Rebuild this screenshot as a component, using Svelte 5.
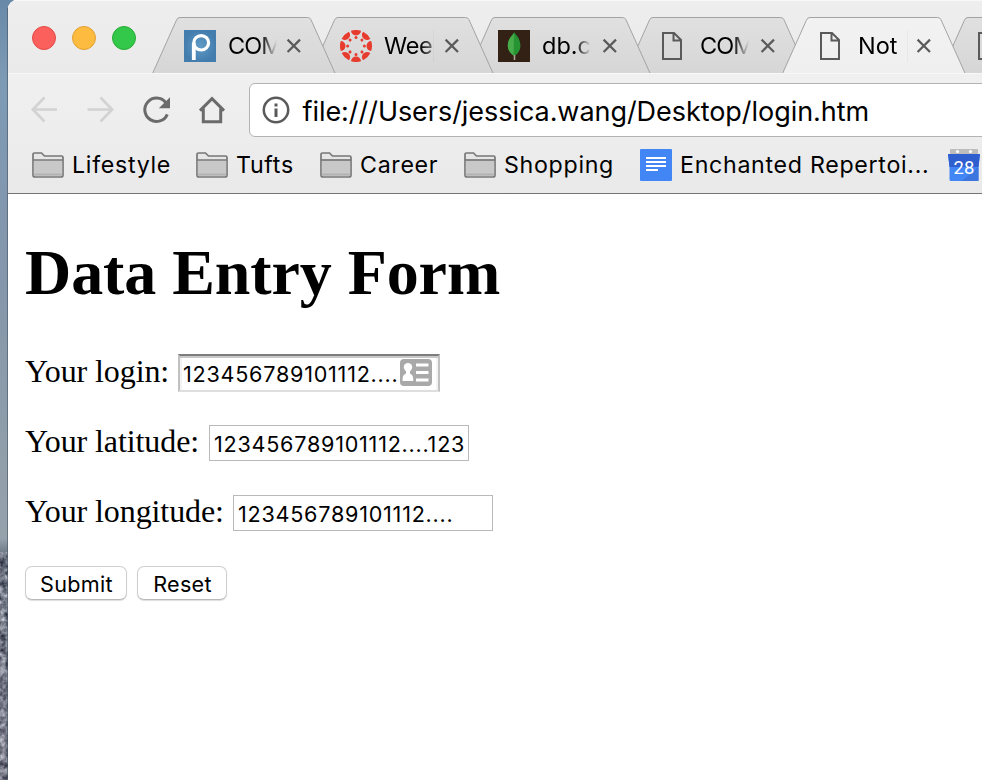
<script>
  const tabs = [
    { title: 'COM', icon: 'pandora', spacing: -0.9, inset: 32, gap: 8 },
    { title: 'Wee', icon: 'canvas', spacing: -0.3, inset: 30.5, gap: 9.5, sliver: true },
    { title: 'db.c', icon: 'mongo', spacing: 0, inset: 31, gap: 9.5 },
    { title: 'COM', icon: 'page', spacing: -0.9, inset: 31.5, gap: 9.5 },
    { title: 'Not', icon: 'page', spacing: 0, inset: 32, gap: 8, active: true, sliver: true },
    { title: '', icon: 'page', spacing: 0, inset: 32, gap: 8 }
  ];

  const folders = [
    { name: 'Lifestyle', width: 164 },
    { name: 'Tufts', width: 124 },
    { name: 'Career', width: 144 },
    { name: 'Shopping', width: 176 }
  ];

  const fields = [
    { id: 'login', label: 'Your login:', value: '123456789101112....', width: 153 },
    { id: 'latitude', label: 'Your latitude:', value: '123456789101112....123', width: 184 },
    { id: 'longitude', label: 'Your longitude:', value: '123456789101112....', width: 208 }
  ];

  const spokes = [0, 45, 90, 135, 180, 225, 270, 315];
</script>

<div class="desktop">
  <svg class="wallpaper" width="14" height="780" aria-hidden="true">
    <defs>
      <linearGradient id="sky" x1="0" y1="0" x2="0" y2="1">
        <stop offset="0" stop-color="#6889a8" />
        <stop offset=".1" stop-color="#7d9ab5" />
        <stop offset=".35" stop-color="#8496ab" />
        <stop offset=".6" stop-color="#919faa" />
        <stop offset=".69" stop-color="#96a2ab" />
        <stop offset=".715" stop-color="#626f7d" />
        <stop offset=".77" stop-color="#6e7886" />
        <stop offset="1" stop-color="#74737f" />
      </linearGradient>
      <filter id="grain" x="0" y="0" width="1" height="1" color-interpolation-filters="sRGB">
        <feTurbulence type="fractalNoise" baseFrequency=".16" numOctaves="3" seed="4" />
        <feColorMatrix values="1.5 0 0 0 -.3  1.5 0 0 0 -.29  1.45 0 0 0 -.21  0 0 0 0 .65" />
      </filter>
    </defs>
    <rect width="14" height="780" fill="url(#sky)" />
    <rect y="552" width="14" height="228" filter="url(#grain)" />
    <rect x="7" y="8" width="1" height="772" fill="#465462" opacity=".6" />
  </svg>

  <div class="window">
    <header>
      <div class="strip">
        <div class="lights"><i class="red"></i><i class="yellow"></i><i class="green"></i></div>
        <div class="tabs">
          {#each tabs as tab, i}
            <div class="tab" style:z-index={tab.active ? 10 : 9 - i}>
              <svg class="shape" width="184" height="57" viewBox="0 0 184 57" aria-hidden="true">
                <defs>
                  <linearGradient id="tab{i}" x1="0" y1="0" x2="0" y2="1">
                    <stop offset="0" stop-color={tab.active ? '#f2f2f2' : '#e0e0e0'} />
                    <stop offset="1" stop-color={tab.active ? '#efefef' : '#d6d6d6'} />
                  </linearGradient>
                </defs>
                <path
                  d="M.3 57 L24.6 2.8 Q25.6 .5 28 .5 H155.5 Q158 .5 159 2.8 L183.4 57"
                  fill="url(#tab{i})"
                  stroke="#a3a3a3"
                />
              </svg>
              <div class="tab-body" style:padding-left="{tab.inset}px">
                <svg class="favicon" width="32" height="32" viewBox="0 0 32 32" aria-hidden="true">
                  {#if tab.icon === 'pandora'}
                    <radialGradient id="blue"><stop stop-color="#609ac5" /><stop offset="1" stop-color="#427dae" /></radialGradient>
                    <rect width="32" height="32" fill="url(#blue)" />
                    <path d="M9.8 30V12.7" fill="none" stroke="#fff" stroke-width="3.8" />
                    <ellipse cx="17.2" cy="12.8" rx="7.4" ry="7.200" fill="none" stroke="#fff" stroke-width="3.2" />
                  {:else if tab.icon === 'canvas'}
                    {#each spokes as angle}
                      <g transform="rotate({angle} 16 16)" fill="#e73b2e">
                        <path d="M11 .8A16 16 0 0 1 21 .8A5 4.700 0 0 1 11 .8Z" />
                        <circle cx="16" cy="7.6" r="1.5" />
                      </g>
                    {/each}
                  {:else if tab.icon === 'mongo'}
                    <rect width="32" height="32" fill="#332116" />
                    <path d="M16.2 2.3c1.5 2.8 6.2 5.7 6.2 13.3 0 5.3-2.8 8-5.4 10.2h-1.3c-2.9-2-5.9-5.1-5.9-10.2 0-7 5-10.5 6.4-13.3Z" fill="#279434" />
                    <path d="M16 3c-1.4 3-6.2 5.6-6.2 12.6 0 5 2.8 7.8 5.8 10Z" fill="#49ac4b" />
                    <path d="M16.5 25v5" stroke="#aaa18f" stroke-width="1.6" />
                  {:else}
                    <path d="M7 3H18L25 10V29H7Z M17.5 3V10.5H25" fill="none" stroke="#5a5a5a" stroke-width="2" />
                  {/if}
                </svg>
                <span class="title" class:sliver={tab.sliver} style:letter-spacing="{tab.spacing}px">{tab.title}</span>
                <svg class="close" width="16" height="16" viewBox="0 0 16 16" style:margin-left="{tab.gap}px" aria-hidden="true">
                  <path d="M1.6 1.6 14 14M14 1.6 1.6 14" stroke="#5a5a5a" stroke-width="2.2" />
                </svg>
              </div>
            </div>
          {/each}
        </div>
      </div>

      <div class="toolbar">
        <svg class="nav" width="212" height="40" viewBox="0 0 212 40" aria-hidden="true">
          <g fill="none" stroke="#d2d2d2" stroke-width="2.6">
            <path d="M49 20.5H24.5M36.5 8.5 24.8 20.5 36.5 32.5" />
            <path d="M79.500 20.5H104M92.5 8.5 104.2 20.5 92.5 32.5" />
          </g>
          <path d="M157.700 13.500A11.700 11.700 0 1 0 159.300 25.300" fill="none" stroke="#6b6b6b" stroke-width="3" />
          <path d="M162 8.2V19.3H150.8Z" fill="#6b6b6b" />
          <path d="M192 21.6 204 9.6 216 21.6M195.3 19.5V32.7H212.7V19.5" fill="none" stroke="#6b6b6b" stroke-width="3" />
        </svg>
        <div class="omnibox">
          <svg width="28" height="28" viewBox="0 0 28 28" aria-hidden="true">
            <circle cx="14" cy="14" r="12.2" fill="none" stroke="#5a5a5a" stroke-width="2.5" />
            <path d="M12.5 7.5h3v3h-3ZM12.5 12.5h3V21h-3Z" fill="#5a5a5a" />
          </svg>
          <span>file:///Users/jessica.wang/Desktop/login.htm</span>
        </div>
      </div>

      <nav>
        {#each folders as folder}
          <div class="bookmark" style:width="{folder.width}px">
            <svg width="32" height="26" viewBox="0 0 32 26" aria-hidden="true">
              <path d="M1 23V2.6Q1 1 2.6 1H9.5L12.5 4H29.5Q31 4 31 5.5V23Q31 25 29 25H3Q1 25 1 23Z" fill="#e6e6e6" stroke="#777" stroke-width="1.7" />
              <path d="M1.8 8.5H30.2V24H1.8Z" fill="#c8c8c8" />
              <path d="M2 22.5H30" stroke="#b3b3b3" stroke-width="2" />
              <path d="M1 8H31" stroke="#777" stroke-width="1.7" />
            </svg>
            <span>{folder.name}</span>
          </div>
        {/each}
        <div class="bookmark doc">
          <svg width="32" height="32" viewBox="0 0 32 32" aria-hidden="true">
            <rect width="32" height="32" rx="1" fill="#4285f4" />
            <path d="M6 9H26M6 13H26M6 17H26M6 21H18" stroke="#fff" stroke-width="2" />
          </svg>
          <span>Enchanted Repertoi...</span>
        </div>
        <svg class="calendar" width="32" height="32" viewBox="0 0 32 32" aria-hidden="true">
          <path d="M2 0H30V6H2Z" fill="#bdbdbd" />
          <circle cx="9.5" cy="2.5" r="1.6" fill="#fff" /><circle cx="22.5" cy="2.5" r="1.6" fill="#fff" />
          <path d="M0 5H32L30.5 18V30.5Q30.5 32 29 32H3Q1.5 32 1.5 30.5V18Z" fill="#4285f4" />
          <path d="M0 5H32L30.5 18H1.5Z" fill="#2f5fcf" />
          <path d="M22 25 30.5 18V32H14Z" fill="#3c75de" />
          <text x="16" y="25" text-anchor="middle" font-family="Roboto, sans-serif" font-size="18.5" fill="#fff">28</text>
        </svg>
      </nav>
    </header>

    <main>
      <h1>Data Entry Form</h1>
      <form onsubmit={(event) => event.preventDefault()}>
        {#each fields as field}
          <div class="row {field.id}">
            <label for={field.id} style:width="{field.width}px">{field.label}</label>
            <div class="field">
              <input id={field.id} type="text" value={field.value} />
              {#if field.id === 'login'}
                <svg class="card" width="32" height="27" viewBox="0 0 32 27" aria-hidden="true">
                  <rect width="32" height="27" rx="4" fill="#a9a9a9" />
                  <circle cx="8" cy="8.3" r="4.2" fill="#fff" />
                  <path d="M6 11h4v3.5q3.2 1.5 3.2 5V22H2.6v-2.5q0-3.5 3.4-5Z" fill="#fff" />
                  <path d="M16 6H28.5M16 13.5H28.5M16 21H28.5" stroke="#fff" stroke-width="3" />
                </svg>
              {/if}
            </div>
          </div>
        {/each}
        <div class="buttons">
          <button type="submit" class="submit">Submit</button>
          <button type="reset" class="reset">Reset</button>
        </div>
      </form>
    </main>
  </div>
</div>

<style>
  :global(body) { margin: 0; overflow: hidden; }
  * { box-sizing: border-box; }
  svg { display: block; flex: none; }
  .desktop { position: relative; width: 982px; height: 780px; overflow: hidden; padding-left: 8px; }
  .wallpaper { position: absolute; left: 0; top: 0; }
  .window {
    position: relative; width: 974px; height: 780px; overflow: hidden;
    background: #fff; border-top-left-radius: 9px;
    font-family: Inter, "Liberation Sans", sans-serif; color: #000;
  }
  header { height: 194px; border-bottom: 1px solid #747474; background: #ececec; }
  .strip {
    height: 73px; display: flex; overflow: hidden;
    background: linear-gradient(#eee, #eaeaea); box-shadow: inset 0 1px #f8f8f8;
  }
  .lights { display: flex; gap: 16px; padding: 26px 0 0 24px; width: 144px; flex: none; }
  .lights i { width: 24px; height: 24px; border-radius: 50%; border: 1px solid; }
  .lights .red { background: #fc605c; border-color: #e24b46; }
  .lights .yellow { background: #fdbc40; border-color: #e1a032; }
  .lights .green { background: #34c84a; border-color: #27ab37; }
  .tabs { display: flex; padding-top: 17px; flex: none; }
  .tab { position: relative; width: 183.5px; margin-right: -26px; height: 56px; flex: none; }
  .shape { position: absolute; left: 0; top: 0; }
  .tab-body { position: relative; display: flex; height: 56px; padding-top: 13px; }
  .title {
    width: 50px; margin-left: 12px; height: 32px; white-space: nowrap;
    font-size: 23.5px; line-height: 32px;
    -webkit-mask-image: linear-gradient(90deg, #000 33px, transparent 49px);
    mask-image: linear-gradient(90deg, #000 33px, transparent 49px);
  }
  .sliver {
    -webkit-mask-image: linear-gradient(90deg, #000 36px, #0007 49px);
    mask-image: linear-gradient(90deg, #000 36px, #0007 49px);
    border-right: 1px solid #0001;
  }
  .close { margin-top: 8px; }
  .toolbar {
    height: 64px; display: flex; padding-top: 9px; border-top: 1px solid #f8f8f8;
    background: linear-gradient(#f0f0f0, #ededed);
  }
  .nav { margin: 6px 29px 0 0; overflow: visible; }
  .omnibox {
    width: 760px; height: 54px; flex: none; display: flex; align-items: center;
    padding: 0 0 0 12px; background: #fff; border: 1px solid #b3b3b3; border-radius: 6px;
  }
  .omnibox span { margin: 3px 0 0 12.5px; font-size: 27px; line-height: 40px; letter-spacing: -0.05px; white-space: nowrap; }
  nav {
    height: 56px; display: flex; align-items: center; padding-left: 24px;
    background: linear-gradient(#ededed, #e9e9e9);
  }
  .bookmark { display: flex; align-items: center; flex: none; font-size: 23.2px; white-space: nowrap; line-height: 32px; letter-spacing: 0.7px; }
  .bookmark span { margin: 0 0 0 8px; }
  .doc { width: 308px; }
  main { padding: 0 17px; font-family: "Liberation Serif", "Times New Roman", serif; }
  h1 { margin: 0; padding-top: 42px; font-size: 64px; line-height: 74px; font-weight: 700; letter-spacing: -0.08px; white-space: nowrap; }
  form { padding-top: 44px; }
  .row { display: flex; height: 70px; }
  .row.login { height: 71px; }
  label { font-size: 32px; line-height: 36px; margin-top: -2px; letter-spacing: -0.1px; white-space: nowrap; flex: none; }
  .login label { margin-top: -1px; }
  .field { position: relative; }
  input {
    display: block; width: 260px; height: 36px; padding: 2px 0 0 4px; border: 1px solid #b9b9b9;
    border-radius: 0; outline: 0; background: #fff; color: #000;
    font: 21.6px/32px Inter, "Liberation Sans", sans-serif; letter-spacing: 0.75px;
  }
  .login input {
    width: 262px; height: 38px; border: 2px solid; padding: 2px 0 0 3px;
    border-color: #7d7d7d #c1c1c1 #dedede #c1c1c1; box-shadow: inset 0 2px #c8c8c8, inset 2px 0 #f3f3f3, inset -2px 0 #f3f3f3;
  }
  .card { position: absolute; left: 222px; top: 5px; }
  .buttons { display: flex; gap: 10px; padding-top: 1px; }
  button {
    height: 34px; padding: 1px 0 0 1px; border: 1px solid #cfcfcf; border-bottom-color: #b9b9b9; border-radius: 7px;
    background: #fff; color: #000; box-shadow: 0 1px 1px #0002;
    font: 21.6px/32px Inter, "Liberation Sans", sans-serif; letter-spacing: 0.3px;
  }
  .submit { width: 102px; }
  .reset { width: 90px; }
</style>
